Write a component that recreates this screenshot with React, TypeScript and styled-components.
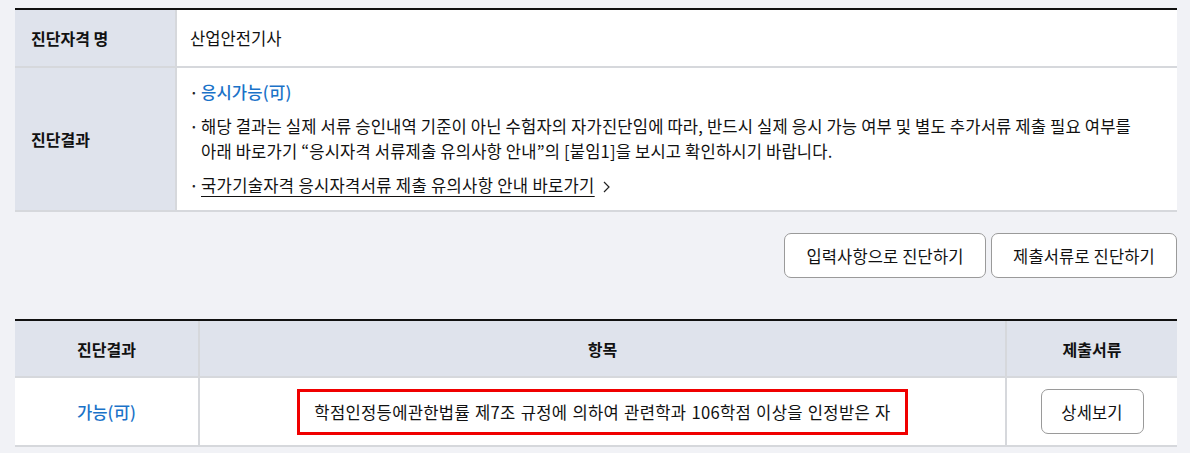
import React from "react";
import styled, { createGlobalStyle } from "styled-components";

const GlobalStyle = createGlobalStyle`
  html, body {
    margin: 0;
    padding: 0;
    background: #f1f2f6;
  }
  body {
    font-family: "Noto Sans CJK KR", "Noto Sans", sans-serif;
    color: #111;
    word-break: keep-all;
  }
`;

const Page = styled.div`
  padding: 8px 13px 0 15px;
`;

const InfoTable = styled.div`
  border-top: 2px solid #111;
  background: #fff;
`;

const InfoRow = styled.div`
  display: grid;
  grid-template-columns: 162px 1fr;
  border-bottom: 2px solid #d6d8dc;
`;

const InfoLabel = styled.div`
  background: #dfe3ec;
  border-right: 2px solid #d6d8dc;
  display: flex;
  align-items: center;
  padding-left: 16px;
  font-size: 16px;
  font-weight: 700;
`;

const InfoValue = styled.div<{ $tall?: boolean }>`
  padding: ${(p) => (p.$tall ? "12px 13px 12px 13px" : "0 13px")};
  min-height: ${(p) => (p.$tall ? "auto" : "56px")};
  display: flex;
  flex-direction: column;
  justify-content: center;
  gap: 9px;
  font-size: 16.6px;
`;

const Bullet = styled.div<{ $blue?: boolean }>`
  display: flex;
  line-height: 25px;
  letter-spacing: 0.15px;
  color: ${(p) => (p.$blue ? "#1a72c8" : "#111")};
  font-weight: ${(p) => (p.$blue ? 500 : 400)};
  &::before {
    content: "·";
    flex: none;
    width: 11px;
    color: #222;
    font-size: 13px;
    font-weight: 700;
  }
`;

const LinkText = styled.span`
  text-decoration: underline;
  text-underline-offset: 4px;
  letter-spacing: 0.3px;
`;

const Chevron = styled.svg`
  margin-left: 8px;
  vertical-align: -1px;
`;

const ButtonBar = styled.div`
  display: flex;
  justify-content: flex-end;
  gap: 5px;
  margin-top: 21px;
`;

const OutlineButton = styled.button<{ $w?: number }>`
  height: 45px;
  width: ${(p) => (p.$w ? `${p.$w}px` : "auto")};
  padding: 0;
  background: #fff;
  border: 1px solid #9a9a9a;
  border-radius: 7px;
  font-family: inherit;
  font-size: 16.5px;
  letter-spacing: 0.15px;
  color: #111;
  cursor: pointer;
`;

const ResultTable = styled.div`
  margin-top: 41px;
  border-top: 2px solid #111;
  background: #fff;
`;

const ResultRow = styled.div<{ $head?: boolean }>`
  display: grid;
  grid-template-columns: 185px 1fr 170px;
  background: ${(p) => (p.$head ? "#dfe3ec" : "#fff")};
  border-bottom: 2px solid #d6d8dc;
  min-height: ${(p) => (p.$head ? "55px" : "67px")};
`;

const Cell = styled.div<{ $head?: boolean; $blue?: boolean; $last?: boolean }>`
  display: flex;
  align-items: center;
  justify-content: center;
  font-size: ${(p) => (p.$head ? "16px" : "16.6px")};
  font-weight: ${(p) => (p.$head ? 700 : p.$blue ? 500 : 400)};
  color: ${(p) => (p.$blue ? "#1a72c8" : "#111")};
  border-right: ${(p) => (p.$last ? "none" : "2px solid #d6d8dc")};
`;

const Highlight = styled.div`
  border: 3px solid #f00000;
  padding: 8px 14px;
  line-height: 24px;
  letter-spacing: 0.3px;
  word-spacing: 1px;
`;

const App = () => {
  return (
    <Page>
      <GlobalStyle />
      <InfoTable>
        <InfoRow>
          <InfoLabel>진단자격 명</InfoLabel>
          <InfoValue>산업안전기사</InfoValue>
        </InfoRow>
        <InfoRow>
          <InfoLabel>진단결과</InfoLabel>
          <InfoValue $tall>
            <Bullet $blue>응시가능(可)</Bullet>
            <Bullet>
              해당 결과는 실제 서류 승인내역 기준이 아닌 수험자의 자가진단임에 따라, 반드시 실제 응시 가능 여부 및 별도 추가서류 제출 필요 여부를
              아래 바로가기 “응시자격 서류제출 유의사항 안내”의 [붙임1]을 보시고 확인하시기 바랍니다.
            </Bullet>
            <Bullet>
              <span>
                <LinkText>국가기술자격 응시자격서류 제출 유의사항 안내 바로가기</LinkText>
                <Chevron width="7" height="12" viewBox="0 0 7 12">
                  <path d="M1 1l5 5-5 5" fill="none" stroke="#222" strokeWidth="1.2" />
                </Chevron>
              </span>
            </Bullet>
          </InfoValue>
        </InfoRow>
      </InfoTable>

      <ButtonBar>
        <OutlineButton $w={202}>입력사항으로 진단하기</OutlineButton>
        <OutlineButton $w={186}>제출서류로 진단하기</OutlineButton>
      </ButtonBar>

      <ResultTable>
        <ResultRow $head>
          <Cell $head>진단결과</Cell>
          <Cell $head>항목</Cell>
          <Cell $head $last>제출서류</Cell>
        </ResultRow>
        <ResultRow>
          <Cell $blue>가능(可)</Cell>
          <Cell>
            <Highlight>학점인정등에관한법률 제7조 규정에 의하여 관련학과 106학점 이상을 인정받은 자</Highlight>
          </Cell>
          <Cell $last>
            <OutlineButton $w={103}>상세보기</OutlineButton>
          </Cell>
        </ResultRow>
      </ResultTable>
    </Page>
  );
};

export default App;
